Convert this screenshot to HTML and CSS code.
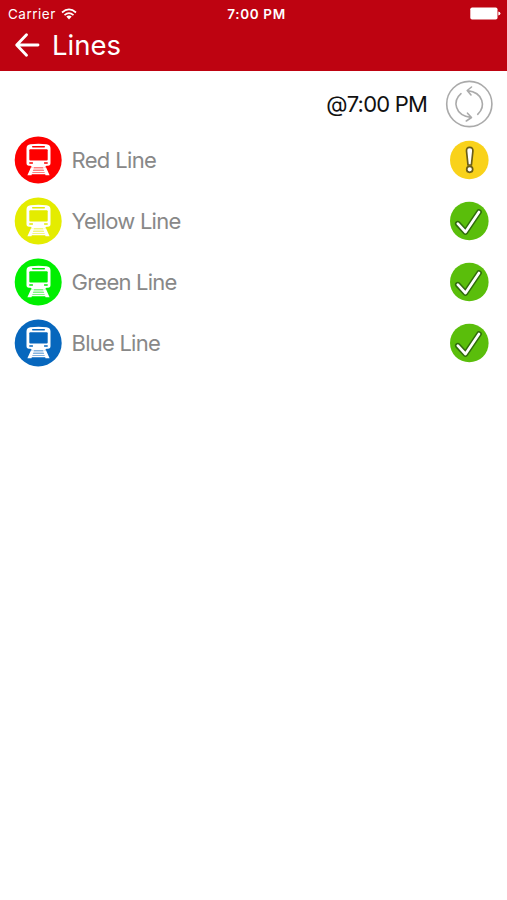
FILE: index.html
```
<!DOCTYPE html>
<html lang="en">
<head>
<meta charset="utf-8">
<meta name="viewport" content="width=device-width">
<title>Lines</title>
<link rel="stylesheet" href="styles.css">
</head>
<body>
<svg class="defs" width="0" height="0" aria-hidden="true">
  <symbol id="train" viewBox="0 0 48 48">
    <circle cx="24.200" cy="24" r="23.500" fill="currentColor"/>
    <path fill="#fff" d="M16.500 8.200Q24.500 7.200 32.500 8.200Q36.500 8.700 36.500 12.500V27Q36.500 29.800 34 29.800H32.500L30.500 31.600H18.500L16.500 29.800H15Q12.500 29.800 12.500 27V12.500Q12.500 8.700 16.500 8.200Z"/>
    <rect x="18" y="10" width="13" height="1.400" rx=".7" fill="currentColor"/>
    <rect x="15.300" y="13.200" width="18.400" height="11.300" rx="1" fill="currentColor"/>
    <path fill="currentColor" d="M15.300 26.200h3.600v1.600h-3.600zM30.100 26.200h3.600v1.600h-3.600z"/>
    <path fill="#fff" d="M17 31.200h3L17.500 39.300H13.400zM29 31.200H32L35.600 39.300H31.500z"/>
    <path fill="none" stroke="#fff" stroke-width="1.600" d="M18.500 33h12M18 35.200h13M17.500 37.400h14"/>
  </symbol>
  <symbol id="check" viewBox="0 0 40 40">
    <circle cx="20.300" cy="20" r="19.300" fill="#5abe0b"/>
    <g fill="none" stroke-linecap="round" stroke-linejoin="round">
      <path stroke="#2f6b0c" stroke-width="5.700" d="M8.800 22.700L16.500 31L30 11"/>
      <path stroke="#fff" stroke-width="2.700" d="M8.800 22.700L16.500 31L30 11"/>
    </g>
  </symbol>
</svg>

<header class="header">
  <div class="status">
    <div class="carrier">
      <span>Carrier</span>
      <svg width="16" height="12" viewBox="0 0 16 12" fill="none" stroke="#fff" stroke-width="1.700">
        <path d="M1 4.500Q8-1.700 15 4.500M3.500 7.100Q8 3.200 12.500 7.100"/>
        <path fill="#fff" stroke="none" d="M5.300 8.600Q8 6.500 10.700 8.600L8 11.400Z"/>
      </svg>
    </div>
    <span class="clock">7:00 PM</span>
    <svg class="battery" width="31" height="13" viewBox="0 0 31 13" fill="#fff">
      <rect x=".3" y=".5" width="27.200" height="12" rx="1.800"/>
      <path d="M28.300 4.500Q30.500 5 30.500 6.500T28.300 8.500Z"/>
    </svg>
  </div>
  <div class="nav">
    <svg width="26" height="26" viewBox="0 0 26 26" fill="none" stroke="#fff" stroke-width="2.900" stroke-linecap="round" stroke-linejoin="round">
      <path d="M12.500 2.800L2.700 13L12.500 23.200M3.300 13H24"/>
    </svg>
    <h1 class="title">Lines</h1>
  </div>
</header>

<main>
  <div class="refresh">
    <span class="time">@7:00 PM</span>
    <svg width="48" height="48" viewBox="0 0 48 48" fill="none" stroke="#aaa" stroke-width="1.600" stroke-linecap="round" stroke-linejoin="round">
      <circle cx="24.300" cy="24" r="22.600"/>
      <path d="M16 13.700C7.500 21 9.500 35.500 26 37.500M22.500 33.200L26.500 37.500L21.300 41"/>
      <path d="M32.700 34.300C41 26.500 38.500 12.500 22.500 10.600M26.500 7L22.200 10.500L26 15"/>
    </svg>
  </div>
  <ul class="lines">
    <li class="line">
      <svg class="train red"><use href="#train"/></svg>
      <span class="name n-red">Red Line</span>
      <svg class="state" viewBox="0 0 40 40">
        <circle cx="20.300" cy="20" r="19.300" fill="#f9d21a"/>
        <path fill="#fff" stroke="#695c18" stroke-width="1.700" d="M20.700 7.300Q24.100 7.300 23.900 11L22.400 25H19L17.500 11Q17.300 7.300 20.700 7.300Z"/>
        <circle cx="20.700" cy="29.300" r="3" fill="#fff" stroke="#695c18" stroke-width="1.700"/>
      </svg>
    </li>
    <li class="line">
      <svg class="train yellow"><use href="#train"/></svg>
      <span class="name">Yellow Line</span>
      <svg class="state"><use href="#check"/></svg>
    </li>
    <li class="line">
      <svg class="train green"><use href="#train"/></svg>
      <span class="name">Green Line</span>
      <svg class="state"><use href="#check"/></svg>
    </li>
    <li class="line">
      <svg class="train blue"><use href="#train"/></svg>
      <span class="name">Blue Line</span>
      <svg class="state"><use href="#check"/></svg>
    </li>
  </ul>
</main>
</body>
</html>
```
FILE: styles.css
```
* { box-sizing: border-box; }
body {
  margin: 0;
  background: #fff;
  font-family: Inter, "Liberation Sans", sans-serif;
}
.defs { display: none; }
svg { display: block; flex: none; }
.header {
  height: 71px;
  background: #be0311;
  color: #fff;
}
.status {
  display: grid;
  grid-template-columns: 1fr auto 1fr;
  align-items: center;
  height: 27px;
  padding: 0 6px 0 8px;
  font-size: 13.500px;
}
.carrier { display: flex; align-items: center; gap: 5px; letter-spacing: .5px; }
.clock { font-weight: 600; letter-spacing: .65px; margin-left: 4px; }
.battery { justify-self: end; }
.nav {
  display: flex;
  align-items: center;
  gap: 12px;
  height: 36px;
  padding-left: 14px;
}
.title { margin: 0; font-size: 27.500px; font-weight: 400; line-height: 36px; }
.refresh {
  display: flex;
  align-items: center;
  justify-content: flex-end;
  gap: 18px;
  height: 58px;
  padding: 8px 14px 0 0;
}
.time { color: #111; font-size: 22px; letter-spacing: -.8px; }
.lines { margin: 0; padding: 0; list-style: none; }
.line {
  display: flex;
  align-items: center;
  height: 61px;
  padding: 0 17px 0 14px;
}
.train { width: 48px; height: 48px; }
.name { flex: 1; margin-left: 9.500px; color: #888; font-size: 22px; letter-spacing: -.76px; }
.n-red { letter-spacing: -.65px; }
.state { width: 40px; height: 40px; margin-right: 1px; }
.red { color: #fe0000; }
.yellow { color: #e4ec00; }
.green { color: #00ef00; }
.blue { color: #0767bd; }
```
